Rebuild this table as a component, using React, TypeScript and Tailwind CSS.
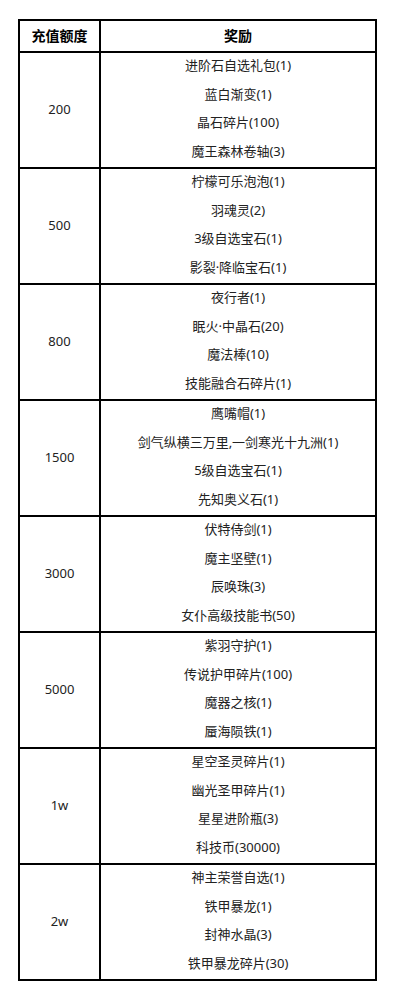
const groups: { amount: string; items: string[] }[] = [
  { amount: "200", items: ["进阶石自选礼包(1)", "蓝白渐变(1)", "晶石碎片(100)", "魔王森林卷轴(3)"] },
  { amount: "500", items: ["柠檬可乐泡泡(1)", "羽魂灵(2)", "3级自选宝石(1)", "影裂·降临宝石(1)"] },
  { amount: "800", items: ["夜行者(1)", "眠火·中晶石(20)", "魔法棒(10)", "技能融合石碎片(1)"] },
  { amount: "1500", items: ["鹰嘴帽(1)", "剑气纵横三万里,一剑寒光十九洲(1)", "5级自选宝石(1)", "先知奥义石(1)"] },
  { amount: "3000", items: ["伏特侍剑(1)", "魔主坚壁(1)", "辰唤珠(3)", "女仆高级技能书(50)"] },
  { amount: "5000", items: ["紫羽守护(1)", "传说护甲碎片(100)", "魔器之核(1)", "蜃海陨铁(1)"] },
  { amount: "1w", items: ["星空圣灵碎片(1)", "幽光圣甲碎片(1)", "星星进阶瓶(3)", "科技币(30000)"] },
  { amount: "2w", items: ["神主荣誉自选(1)", "铁甲暴龙(1)", "封神水晶(3)", "铁甲暴龙碎片(30)"] },
];

export default function App() {
  return (
    <div className="min-h-[999px] bg-white pt-[19px] pl-[18px] font-['Noto_Sans','Noto_Sans_CJK_SC',sans-serif] text-[13px] text-[#222]">
      <div className="w-[359px] border-2 border-black">
        {/* header */}
        <div className="flex h-[30px] font-bold text-[14px] text-black">
          <div className="w-[81px] flex items-center justify-center pb-[2px] border-r-2 border-black">充值额度</div>
          <div className="flex-1 flex items-center justify-center pb-[2px]">奖励</div>
        </div>
        {groups.map((g) => (
          <div key={g.amount} className="flex h-[116px] border-t-2 border-black">
            <div className="w-[81px] flex items-center justify-center border-r-2 border-black">{g.amount}</div>
            <div className="flex-1 flex flex-col">
              {g.items.map((it) => (
                <div key={it} className="h-[28.5px] flex items-center justify-center pb-[3px] whitespace-nowrap">
                  {it}
                </div>
              ))}
            </div>
          </div>
        ))}
      </div>
    </div>
  );
}
